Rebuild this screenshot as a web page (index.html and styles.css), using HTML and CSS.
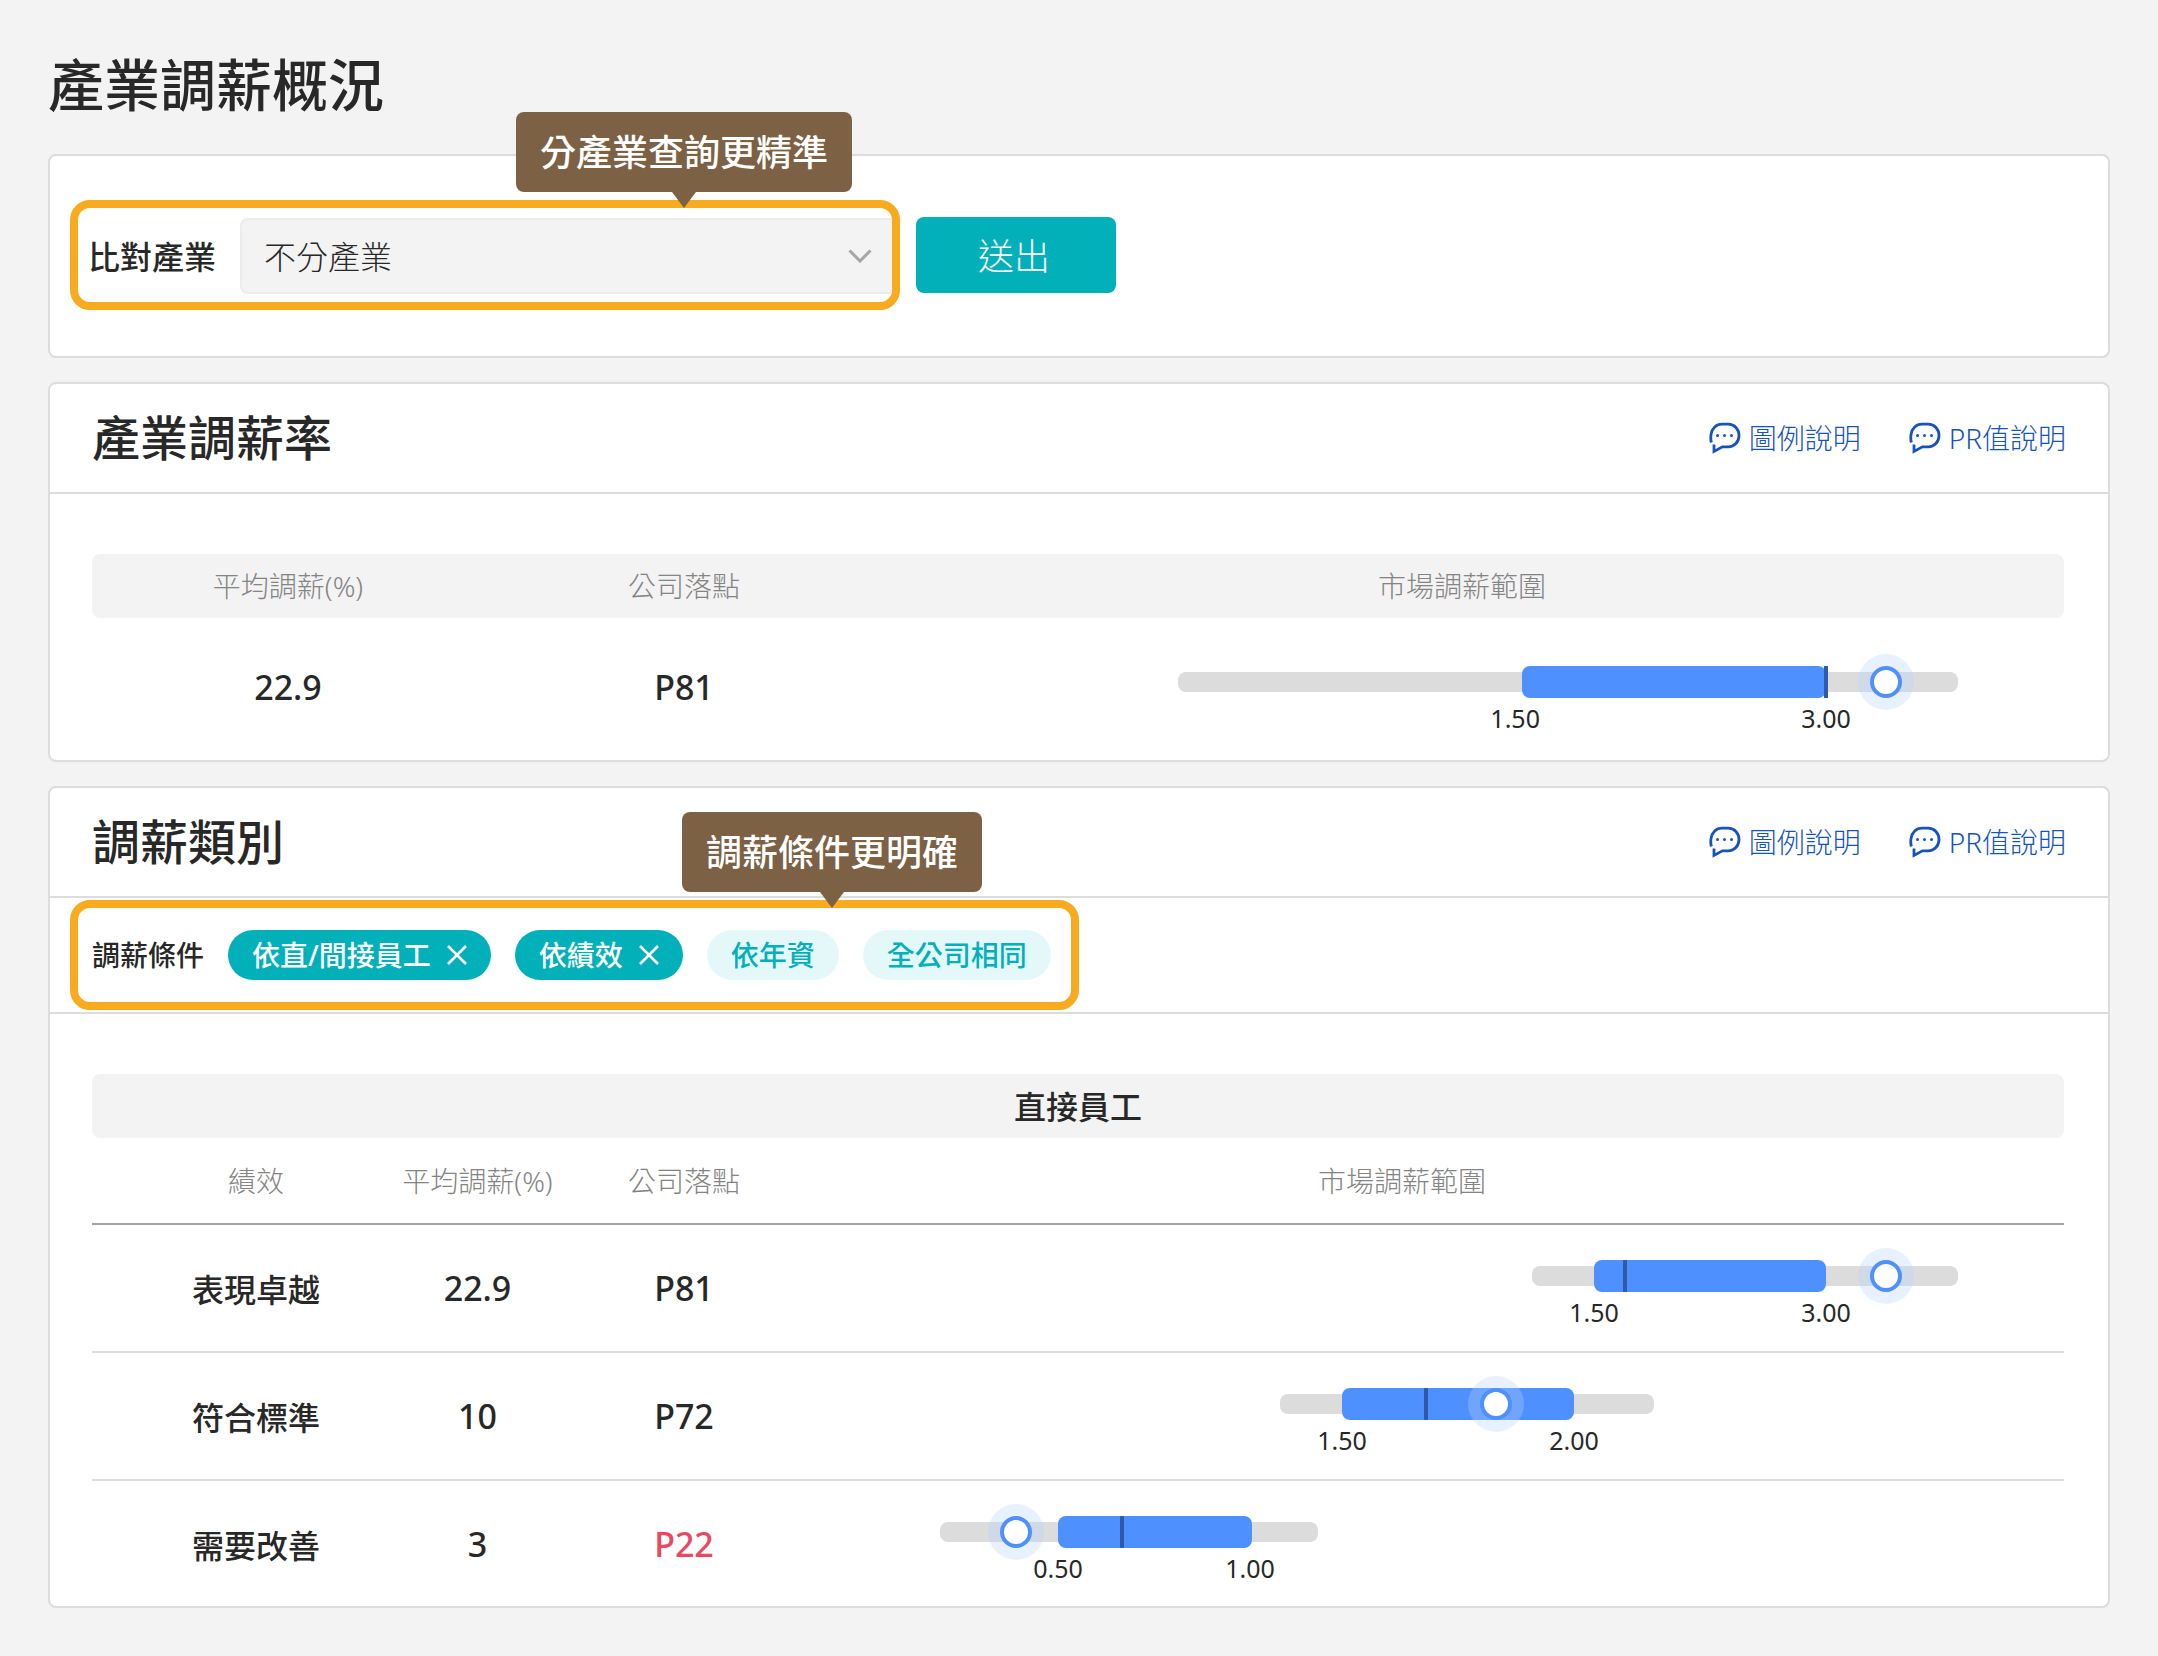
FILE: index.html
```html
<!DOCTYPE html>
<html lang="zh-Hant">
<head>
<meta charset="utf-8">
<meta name="viewport" content="width=device-width, initial-scale=1">
<title>產業調薪概況</title>
<link rel="stylesheet" href="styles.css">
</head>
<body>
<svg class="sprite" aria-hidden="true">
  <symbol id="icon-chat" viewBox="0 0 32 32">
    <path d="M2.400 20.500C1.800 18.600 1.600 15.500 2 12.600C2.800 6.400 7.400 2.200 13 2.200H19.200C25.400 2.200 30 7 30 13.500S25.400 24.800 19.200 24.800H13.400L5 29.400V22.500" fill="none" stroke="currentColor" stroke-width="2.800"/>
    <circle cx="8.500" cy="13.500" r="1.500" fill="currentColor"/>
    <circle cx="15.500" cy="13.500" r="1.500" fill="currentColor"/>
    <circle cx="22.500" cy="13.500" r="1.500" fill="currentColor"/>
  </symbol>
  <symbol id="icon-close" viewBox="0 0 20 20">
    <path d="M1 1L19 19M19 1L1 19" fill="none" stroke="currentColor" stroke-width="2.600"/>
  </symbol>
</svg>

<main class="page">
  <h1 class="page-title">產業調薪概況</h1>

  <form class="card search">
    <div class="highlight search-field">
      <label class="search-label" for="industry">比對產業</label>
      <div class="select">
        <select id="industry" class="select-control">
          <option>不分產業</option>
        </select>
        <svg class="select-arrow" viewBox="0 0 24 14" aria-hidden="true"><path d="M1.500 1.500L12 12L22.500 1.500" fill="none" stroke="currentColor" stroke-width="3"/></svg>
      </div>
      <div class="tooltip tooltip-industry" role="note">分產業查詢更精準</div>
    </div>
    <button class="submit" type="button">送出</button>
  </form>

  <section class="card">
    <header class="card-header">
      <h2 class="card-title">產業調薪率</h2>
      <nav class="help">
        <a class="help-link" href="#"><svg class="help-icon" aria-hidden="true"><use href="#icon-chat"/></svg>圖例說明</a>
        <a class="help-link" href="#"><svg class="help-icon" aria-hidden="true"><use href="#icon-chat"/></svg>PR值說明</a>
      </nav>
    </header>
    <div class="card-body">
      <table class="table overview">
        <colgroup><col class="col-rate"><col class="col-rank"><col></colgroup>
        <thead>
          <tr><th scope="col">平均調薪(%)</th><th scope="col">公司落點</th><th scope="col">市場調薪範圍</th></tr>
        </thead>
        <tbody>
          <tr>
            <td>22.9</td>
            <td>P81</td>
            <td class="range-cell">
              <div class="range">
                <span class="range-track" style="left:23.38%;width:76.62%"></span>
                <span class="range-fill" style="left:57.17%;width:29.86%"></span>
                <span class="range-median" style="left:87.03%"></span>
                <span class="range-marker" style="left:92.93%"></span>
                <span class="range-value" style="left:56.5%">1.50</span>
                <span class="range-value" style="left:87.03%">3.00</span>
              </div>
            </td>
          </tr>
        </tbody>
      </table>
    </div>
  </section>

  <section class="card">
    <header class="card-header">
      <h2 class="card-title">調薪類別</h2>
      <nav class="help">
        <a class="help-link" href="#"><svg class="help-icon" aria-hidden="true"><use href="#icon-chat"/></svg>圖例說明</a>
        <a class="help-link" href="#"><svg class="help-icon" aria-hidden="true"><use href="#icon-chat"/></svg>PR值說明</a>
      </nav>
    </header>
    <div class="filter-bar">
      <div class="highlight filter" role="group" aria-labelledby="filter-label">
        <span class="filter-label" id="filter-label">調薪條件</span>
        <button class="chip chip-on" type="button" aria-pressed="true">依直/間接員工<svg class="chip-icon" aria-hidden="true"><use href="#icon-close"/></svg></button>
        <button class="chip chip-on" type="button" aria-pressed="true">依績效<svg class="chip-icon" aria-hidden="true"><use href="#icon-close"/></svg></button>
        <button class="chip" type="button" aria-pressed="false">依年資</button>
        <button class="chip" type="button" aria-pressed="false">全公司相同</button>
        <div class="tooltip tooltip-filter" role="note">調薪條件更明確</div>
      </div>
    </div>
    <div class="card-body">
      <table class="table detail">
        <colgroup><col class="col-grade"><col class="col-avg"><col class="col-spot"><col></colgroup>
        <thead>
          <tr class="group"><th scope="colgroup" colspan="4">直接員工</th></tr>
          <tr class="columns"><th scope="col">績效</th><th scope="col">平均調薪(%)</th><th scope="col">公司落點</th><th scope="col">市場調薪範圍</th></tr>
        </thead>
        <tbody>
          <tr>
            <th scope="row">表現卓越</th>
            <td>22.9</td>
            <td>P81</td>
            <td class="range-cell">
              <div class="range">
                <span class="range-track" style="left:58.15%;width:41.85%"></span>
                <span class="range-fill" style="left:64.24%;width:22.79%"></span>
                <span class="range-median" style="left:67.29%"></span>
                <span class="range-marker" style="left:92.93%"></span>
                <span class="range-value" style="left:64.24%">1.50</span>
                <span class="range-value" style="left:87.03%">3.00</span>
              </div>
            </td>
          </tr>
          <tr>
            <th scope="row">符合標準</th>
            <td>10</td>
            <td>P72</td>
            <td class="range-cell">
              <div class="range">
                <span class="range-track" style="left:33.4%;width:36.74%"></span>
                <span class="range-fill" style="left:39.49%;width:22.79%"></span>
                <span class="range-median" style="left:47.74%"></span>
                <span class="range-marker" style="left:54.62%"></span>
                <span class="range-value" style="left:39.49%">1.50</span>
                <span class="range-value" style="left:62.28%">2.00</span>
              </div>
            </td>
          </tr>
          <tr>
            <th scope="row">需要改善</th>
            <td>3</td>
            <td class="low">P22</td>
            <td class="range-cell">
              <div class="range">
                <span class="range-track" style="left:0%;width:37.13%"></span>
                <span class="range-fill" style="left:11.59%;width:19.06%"></span>
                <span class="range-median" style="left:17.88%"></span>
                <span class="range-marker" style="left:7.47%"></span>
                <span class="range-value" style="left:11.59%">0.50</span>
                <span class="range-value" style="left:30.45%">1.00</span>
              </div>
            </td>
          </tr>
        </tbody>
      </table>
    </div>
  </section>
</main>
</body>
</html>
```

FILE: styles.css
```css
:root {
  --ink: #282828;
  --muted: #848484;
  --line: #dcdcdc;
  --surface: #f3f3f3;
  --teal: #02b0ba;
  --teal-soft: #e4f8fa;
  --blue: #4f90ff;
  --link: #1653bd;
  --orange: #f8ab1e;
  --brown: #7c6144;
  --red: #ed4660;
}

* {
  box-sizing: border-box;
}

body {
  margin: 0;
  background: var(--surface);
  color: var(--ink);
  font-family: "Noto Sans", "Noto Sans CJK TC", sans-serif;
  font-size: 28px;
  line-height: 40px;
}

button,
select {
  font: inherit;
}

.sprite {
  display: none;
}

.page {
  display: flex;
  flex-direction: column;
  gap: 24px;
  padding: 42px 48px 48px;
}

.page-title {
  margin: 0 0 4px;
  font-size: 56px;
  font-weight: 500;
  line-height: 84px;
}

.card {
  background: #fff;
  border: 2px solid var(--line);
  border-radius: 8px;
}

.highlight {
  position: relative;
  display: flex;
  align-items: center;
  gap: 24px;
  height: 110px;
  border: 8px solid var(--orange);
  border-radius: 20px;
}

.tooltip {
  position: absolute;
  z-index: 1;
  padding: 15px 24px 13px;
  border-radius: 8px;
  background: var(--brown);
  color: #fff;
  font-size: 36px;
  font-weight: 500;
  line-height: 52px;
  white-space: nowrap;
}

.tooltip::after {
  content: "";
  position: absolute;
  top: 100%;
  left: 50%;
  margin-left: -12px;
  border: 12px solid transparent;
  border-top: 16px solid var(--brown);
  border-bottom: 0;
}

.tooltip-industry {
  left: 438px;
  bottom: 110px;
}

.tooltip-filter {
  left: 604px;
  bottom: 110px;
}

/* Search */

.search {
  display: flex;
  align-items: center;
  gap: 16px;
  padding: 44px 20px 46px;
}

.search-field {
  flex: 0 1 830px;
  padding: 2px 0 0 10px;
}

.search-label {
  padding-top: 2px;
  font-size: 32px;
  font-weight: 500;
  white-space: nowrap;
}

.select {
  position: relative;
  flex: 1;
}

.select-control {
  display: block;
  width: 100%;
  height: 76px;
  padding: 2px 64px 0 22px;
  appearance: none;
  background: var(--surface);
  border: 2px solid #ececec;
  border-right: 0;
  border-radius: 8px 0 0 8px;
  color: var(--ink);
  font-size: 32px;
  font-weight: 300;
}

.select-arrow {
  position: absolute;
  top: 31px;
  right: 20px;
  width: 24px;
  height: 14px;
  color: #a6a6a6;
  pointer-events: none;
}

.submit {
  width: 200px;
  height: 76px;
  padding: 4px 4px 0 0;
  border: 0;
  border-radius: 8px;
  background: var(--teal);
  color: #fff;
  font-size: 36px;
  font-weight: 300;
}

/* Card header */

.card-header {
  display: flex;
  align-items: center;
  justify-content: space-between;
  height: 110px;
  padding: 0 42px;
  border-bottom: 2px solid var(--line);
}

.card-title {
  margin: 0;
  font-size: 48px;
  font-weight: 500;
  line-height: 72px;
}

.help {
  display: flex;
  gap: 48px;
}

.help-link {
  display: flex;
  align-items: center;
  gap: 8px;
  color: var(--link);
  font-weight: 300;
  text-decoration: none;
}

.help-icon {
  width: 32px;
  height: 32px;
}

/* Filter */

.filter-bar {
  display: flex;
  padding: 2px 20px;
  border-bottom: 2px solid var(--line);
}

.filter {
  padding: 0 20px 0 14px;
}

.filter-label {
  font-weight: 500;
}

.chip {
  display: flex;
  align-items: center;
  gap: 16px;
  height: 50px;
  padding: 0 24px;
  border: 0;
  border-radius: 25px;
  background: var(--teal-soft);
  color: var(--teal);
  font-weight: 500;
  white-space: nowrap;
}

.chip-on {
  background: var(--teal);
  color: #fff;
}

.chip-icon {
  width: 20px;
  height: 20px;
}

/* Tables */

.card-body {
  padding: 60px 44px 0 42px;
}

.table {
  width: 100%;
  table-layout: fixed;
  border-collapse: separate;
  border-spacing: 0;
  text-align: center;
}

.table th,
.table td {
  padding: 0;
  white-space: nowrap;
}

.table thead th {
  color: var(--muted);
  font-weight: 300;
}

.table tbody td {
  font-size: 34px;
  font-weight: 500;
}

.table tbody th {
  font-size: 32px;
  font-weight: 500;
}

.table tbody .low {
  color: var(--red);
}

.overview thead th,
.detail .group th {
  height: 64px;
  background: var(--surface);
}

.overview thead th:first-child {
  border-radius: 8px 0 0 8px;
}

.overview thead th:last-child {
  padding-right: 24px;
  border-radius: 0 8px 8px 0;
}

.overview tbody td {
  height: 142px;
  padding-bottom: 4px;
}

.col-rate {
  width: 392px;
}

.col-rank {
  width: 400px;
}

.col-grade {
  width: 235px;
}

.col-avg {
  width: 301px;
}

.col-spot {
  width: 112px;
}

.detail .group th {
  padding-top: 2px;
  border-radius: 8px;
  color: var(--ink);
  font-size: 32px;
  font-weight: 500;
}

.detail .columns th {
  height: 87px;
  border-bottom: 2px solid #a3a3a3;
}

.detail tbody th,
.detail tbody td {
  height: 128px;
  border-bottom: 2px solid var(--line);
}

.detail tbody tr:last-child th,
.detail tbody tr:last-child td {
  height: 125px;
  border-bottom: 0;
}

.detail .columns th:first-child,
.detail tbody th {
  padding-left: 93px;
}

.detail tbody th {
  padding-top: 4px;
}

/* Range chart */

.table .range-cell {
  padding: 0 106px 0 56px;
  vertical-align: top;
}

.detail .range-cell {
  padding-left: 200px;
}

.range {
  position: relative;
  height: 92px;
  margin-top: 23px;
}

.overview .range {
  margin-top: 36px;
}

.range-track,
.range-fill,
.range-median,
.range-marker,
.range-value {
  position: absolute;
}

.range-track {
  top: 18px;
  height: 20px;
  border-radius: 8px;
  background: var(--line);
}

.range-fill {
  top: 12px;
  height: 32px;
  border-radius: 8px;
  background: var(--blue);
}

.range-median {
  top: 12px;
  width: 4px;
  height: 32px;
  margin-left: -2px;
  background: #2f5aa8;
}

.range-marker {
  top: 0;
  width: 56px;
  height: 56px;
  margin-left: -28px;
  border-radius: 50%;
  background: rgb(184 211 255 / 32%);
}

.range-marker::before {
  content: "";
  position: absolute;
  inset: 12px;
  border: 4px solid var(--blue);
  border-radius: 50%;
  background: #fff;
}

.range-value {
  top: 44px;
  width: 80px;
  margin-left: -40px;
  font-size: 25px;
  font-weight: 400;
}
```
